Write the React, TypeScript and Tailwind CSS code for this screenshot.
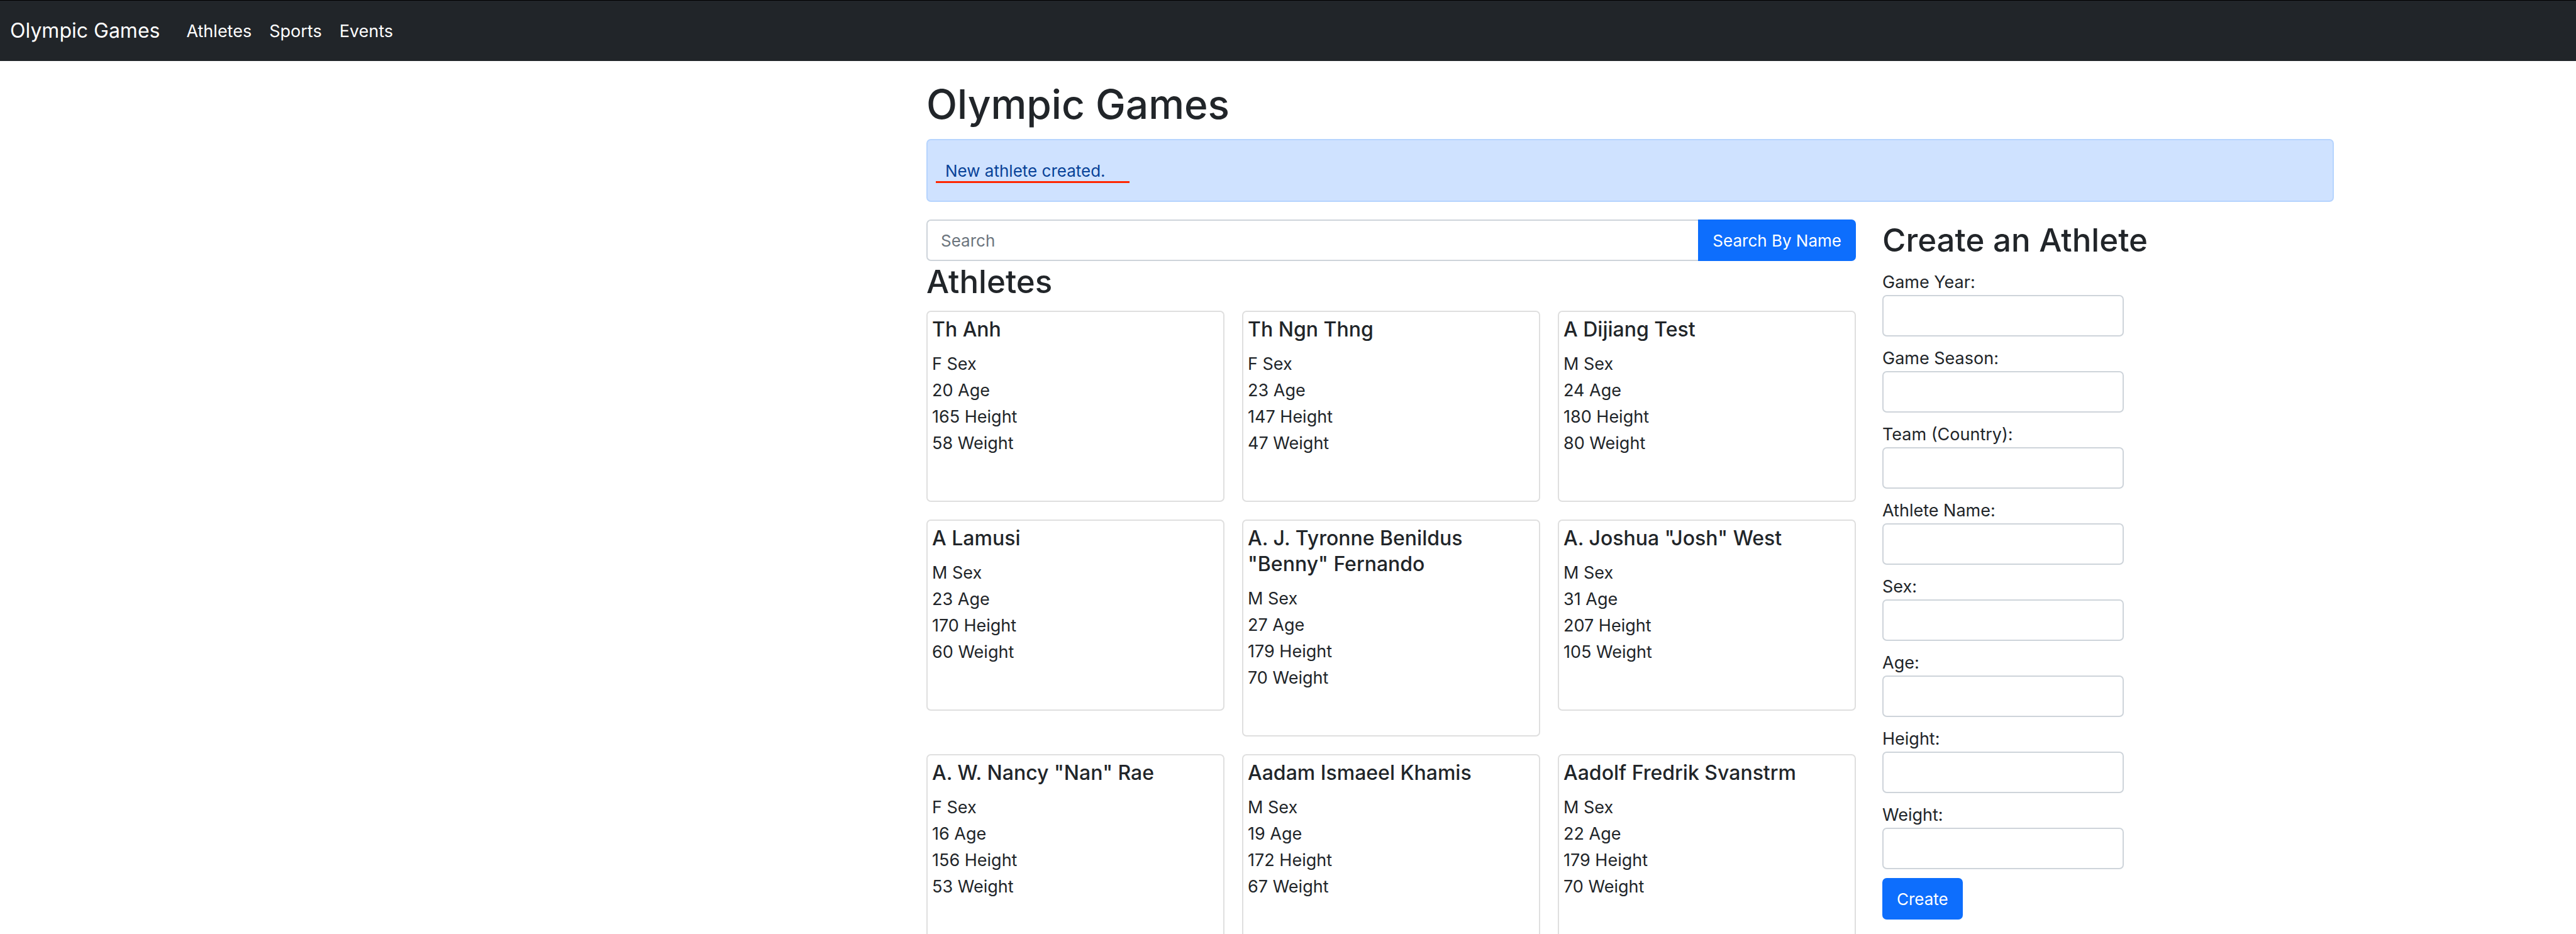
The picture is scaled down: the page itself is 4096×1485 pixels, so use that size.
type Athlete = {
  name: string;
  sex: string;
  age: number;
  height: number;
  weight: number;
};

const athletes: Athlete[] = [
  { name: 'Th Anh', sex: 'F', age: 20, height: 165, weight: 58 },
  { name: 'Th Ngn Thng', sex: 'F', age: 23, height: 147, weight: 47 },
  { name: 'A Dijiang Test', sex: 'M', age: 24, height: 180, weight: 80 },
  { name: 'A Lamusi', sex: 'M', age: 23, height: 170, weight: 60 },
  { name: 'A. J. Tyronne Benildus "Benny" Fernando', sex: 'M', age: 27, height: 179, weight: 70 },
  { name: 'A. Joshua "Josh" West', sex: 'M', age: 31, height: 207, weight: 105 },
  { name: 'A. W. Nancy "Nan" Rae', sex: 'F', age: 16, height: 156, weight: 53 },
  { name: 'Aadam Ismaeel Khamis', sex: 'M', age: 19, height: 172, weight: 67 },
  { name: 'Aadolf Fredrik Svanstrm', sex: 'M', age: 22, height: 179, weight: 70 },
];

const fields = [
  { id: 'year', label: 'Game Year:' },
  { id: 'season', label: 'Game Season:' },
  { id: 'team', label: 'Team (Country):' },
  { id: 'name', label: 'Athlete Name:' },
  { id: 'sex', label: 'Sex:' },
  { id: 'age', label: 'Age:' },
  { id: 'height', label: 'Height:' },
  { id: 'weight', label: 'Weight:' },
];

function NavBar() {
  return (
    <nav className="flex h-[97px] items-center gap-[42px] border-t border-black bg-[#212529] px-4 text-white">
      <a href="#home" className="text-[32px] leading-[52px]">Olympic Games</a>
      <div className="flex gap-7">
        <a href="#athletes">Athletes</a>
        <a href="#sports">Sports</a>
        <a href="#events">Events</a>
      </div>
    </nav>
  );
}

function Notice() {
  return (
    <div role="alert" className="relative mt-[14px] flex h-[100px] items-center rounded-[7px] border-2 border-[#b6d4fe] bg-[#cfe2ff] px-7 text-[26px] text-[#084298]">
      New athlete created.
      <span className="absolute top-[65px] left-[13px] h-[3px] w-[308px] bg-[#ff2600]" />
    </div>
  );
}

function SearchBar() {
  return (
    <form className="flex h-[66px]" onSubmit={(e) => e.preventDefault()}>
      <input
        type="search"
        aria-label="Search"
        placeholder="Search"
        className="min-w-0 flex-1 rounded-l-[7px] border-2 border-r-0 border-[#ced4da] bg-white px-[21px] text-[26px] placeholder:text-[#6c757d]"
      />
      <button type="submit" className="rounded-r-[7px] bg-[#0d6efd] px-[23px] text-[26px] text-white">Search By Name</button>
    </form>
  );
}

function AthleteCard({ athlete }: { athlete: Athlete }) {
  return (
    <article className="rounded-[7px] border-2 border-[#dfdfdf] bg-white px-[7px] pt-[7px] pb-[70px] leading-[42px]">
      <h5 className="mb-[14px] text-[32px] leading-[41px] font-medium">{athlete.name}</h5>
      <p>{athlete.sex} Sex</p>
      <p>{athlete.age} Age</p>
      <p>{athlete.height} Height</p>
      <p>{athlete.weight} Weight</p>
    </article>
  );
}

function CreateForm() {
  return (
    <form onSubmit={(e) => e.preventDefault()}>
      <h2 className="mb-[13px] text-[51px] leading-[66px] font-medium">Create an Athlete</h2>
      <div className="flex flex-col items-start gap-[14px]">
        {fields.map((f) => (
          <div key={f.id} className="flex w-[384px] flex-col">
            <label htmlFor={f.id}>{f.label}</label>
            <input id={f.id} type="text" className="h-[66px] w-full rounded-[7px] border-2 border-[#ced4da] bg-white px-[21px]" />
          </div>
        ))}
        <button type="submit" className="h-[66px] rounded-[7px] bg-[#0d6efd] px-[23px] text-[26px] text-white">Create</button>
      </div>
    </form>
  );
}

export default function App() {
  return (
    <div className="min-h-screen bg-white font-['Inter',sans-serif] text-[27px] leading-[41px] text-[#212529]">
      <NavBar />
      <main className="grid grid-cols-[1473fr_2238fr_385fr] pt-7">
        <div className="col-start-2">
          <h1 className="text-[64px] leading-[82px] font-medium">Olympic Games</h1>
          <Notice />
          <div className="mt-7 grid grid-cols-[1478fr_718fr] items-start gap-[42px]">
            <section>
              <SearchBar />
              <h2 className="mb-[13px] text-[51px] leading-[66px] font-medium">Athletes</h2>
              <div className="grid grid-cols-3 items-start gap-7">
                {athletes.map((a) => (
                  <AthleteCard key={a.name} athlete={a} />
                ))}
              </div>
            </section>
            <CreateForm />
          </div>
        </div>
      </main>
    </div>
  );
}
